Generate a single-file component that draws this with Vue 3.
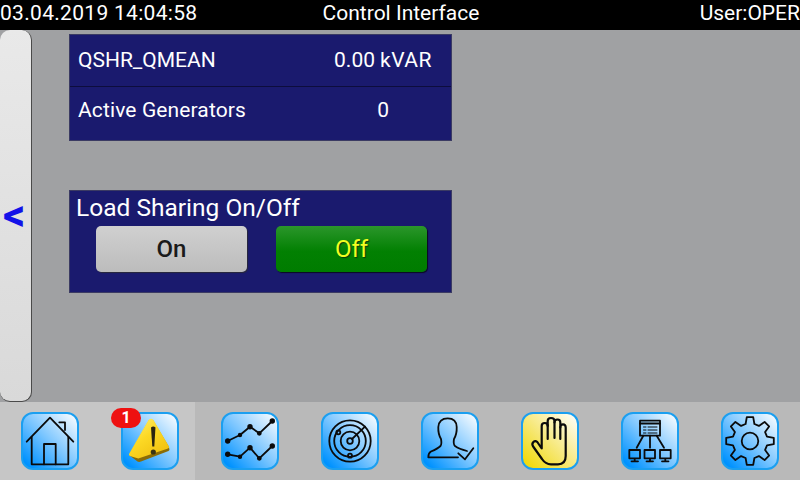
<template>
  <div class="screen">
    <header class="topbar">
      <span class="topbar-date">03.04.2019 14:04:58</span>
      <span class="topbar-title">Control Interface</span>
      <span class="topbar-user">User:OPER</span>
    </header>

    <main class="main">
      <div class="side-tab"><span class="side-arrow">&lt;</span></div>
      <div class="content">
        <section class="panel values">
          <div class="row">
            <span class="row-label">QSHR_QMEAN</span>
            <span class="row-value">0.00</span>
            <span class="row-unit">kVAR</span>
          </div>
          <div class="row">
            <span class="row-label">Active Generators</span>
            <span class="row-value single">0</span>
          </div>
        </section>

        <section class="panel sharing">
          <h2 class="panel-title">Load Sharing On/Off</h2>
          <div class="buttons">
            <button class="btn btn-on">On</button>
            <button class="btn btn-off">Off</button>
          </div>
        </section>
      </div>
    </main>

    <footer class="navbar">
      <div v-for="item in navItems" :key="item.name" class="nav-cell">
        <div class="tile" :class="{ yellow: item.name === 'hand' }">
          <span v-if="item.name === 'alarm'" class="badge">1</span>

          <svg v-if="item.name === 'home'" viewBox="0 0 58 58" class="icon">
            <path d="M5.700 29.700 L29 5.700 L52.300 29.700" />
            <path d="M10.700 25 V52.300 H47.300 V25" />
            <path d="M23 52.300 V32 H34.700 V52.300" />
            <path d="M38.300 10.300 H44 V18" />
          </svg>

          <svg v-else-if="item.name === 'alarm'" viewBox="0 0 58 58" class="icon">
            <defs>
              <linearGradient id="warn" x1="0" y1="0" x2="0.7" y2="1">
                <stop offset="0" stop-color="#fff27a" />
                <stop offset="0.5" stop-color="#fcd925" />
                <stop offset="1" stop-color="#f0c010" />
              </linearGradient>
            </defs>
            <path d="M8 43 L16.500 49.500 Q18 50.300 20 49.500 L47.500 39 Q49 38 48 35 L32 8 L28 8 Z" fill="#8a6c08" stroke="none" />
            <path d="M32.500 8 Q30 5.500 27.500 8 L8 42 Q7.500 43.500 9 44 L17.300 46.500 L47 36.500 Q48.500 36 48 34.500 Z" fill="url(#warn)" stroke="none" />
            <path d="M30 15.500 Q32.300 13.500 34.500 15.500 L33.300 34.500 L31.300 34.500 Z" fill="#2a2410" stroke="none" />
            <circle cx="32.300" cy="40" r="2.600" fill="#3a3414" stroke="none" />
          </svg>

          <svg v-else-if="item.name === 'trend'" viewBox="0 0 58 58" class="icon">
            <path d="M6.700 29 L19 23 L29 14.700 L38.300 21.300 L51.300 9" />
            <path d="M6.700 42.300 L19 44.700 L29 35.700 L38.300 46.300 L51.300 34" />
            <g class="dots">
              <circle cx="6.700" cy="29" r="1.800" /><circle cx="19" cy="23" r="1.300" /><circle cx="29" cy="14.700" r="1.800" /><circle cx="38.300" cy="21.300" r="1.500" /><circle cx="51.300" cy="9" r="1.800" />
              <circle cx="6.700" cy="42.300" r="1.800" /><circle cx="19" cy="44.700" r="1.300" /><circle cx="29" cy="35.700" r="1.800" /><circle cx="38.300" cy="46.300" r="1.500" /><circle cx="51.300" cy="34" r="1.800" />
            </g>
          </svg>

          <svg v-else-if="item.name === 'radar'" viewBox="0 0 58 58" class="icon">
            <circle cx="29" cy="29" r="20.700" />
            <circle cx="29" cy="29" r="15.800" />
            <circle cx="29" cy="29" r="9.300" />
            <circle cx="29" cy="29" r="2.800" />
            <path d="M31 27 L44 14.700" />
            <circle cx="17.300" cy="20.300" r="2" />
            <circle cx="29" cy="43.700" r="2" />
          </svg>

          <svg v-else-if="item.name === 'user'" viewBox="0 0 58 58" class="icon">
            <path d="M37 45.300 H7.300 Q7.300 41 10 39.500 Q17 36.500 19.500 34 Q21 32 20 27 Q17 22 17.300 15 Q18 6.300 26.700 6.300 Q35.500 6.300 35.700 15 Q36 22 33 27 Q32 32 34 34 Q38 37 46 39" />
            <path d="M37.300 41.300 L44 47.300 L52.300 36.300" />
          </svg>

          <svg v-else-if="item.name === 'hand'" viewBox="0 0 58 58" class="icon hand">
            <path d="M20.700 36.500 L16.300 30 Q14 28 12 30.500 Q10.500 32.500 12.500 35 L21 47 Q24.500 52.300 30 52.300 H37 Q44.700 52.300 44.700 44 V15.500 Q44.700 12.300 42 12.300 Q39.300 12.300 39.300 15.500 V10.500 Q39.300 7.500 36.500 7.500 Q33.500 7.500 33.500 10.500 V9 Q33.500 6 30 6 Q26.700 6 26.700 9 V14 Q26.700 11 23.700 11 Q20.700 11 20.700 14 Z" />
            <path d="M26.700 13 V27 M33.500 10 V26 M39.300 15 V27" />
          </svg>

          <svg v-else-if="item.name === 'network'" viewBox="0 0 58 58" class="icon">
            <path d="M19 8.700 H39 V23.700 H19 Z" />
            <path d="M19 11.500 H39" />
            <path d="M22.500 15 H25 M27 15 H36 M22.500 18 H25 M27 18 H36 M22.500 21 H25 M27 21 H36" stroke-width="1" />
            <path d="M22.300 23.700 L15.700 35.700 M29 23.700 V35.700 M35.700 23.700 L43 35.700" />
            <path d="M8.300 38 H19 V46.300 H8.300 Z M13.700 46.300 V49 M10.500 49.300 H17" />
            <path d="M23.500 38 H34 V46.300 H23.500 Z M29 46.300 V49 M25.500 49.300 H32" />
            <path d="M39 38 H49.700 V46.300 H39 Z M44.300 46.300 V49 M41 49.300 H47.500" />
          </svg>

          <svg v-else viewBox="0 0 58 58" class="icon">
            <path :d="gearPath" />
            <circle cx="29" cy="29" r="8.300" />
          </svg>
        </div>
      </div>
    </footer>
  </div>
</template>

<script setup>
const navItems = [
  { name: 'home' },
  { name: 'alarm' },
  { name: 'trend' },
  { name: 'radar' },
  { name: 'user' },
  { name: 'hand' },
  { name: 'network' },
  { name: 'gear' }
]

// 8 toothed outline around the centre of the settings tile
const buildGear = () => {
  const cx = 29
  const cy = 29
  const outer = 24
  const inner = 17.5
  const teeth = 8
  const step = (Math.PI * 2) / teeth
  const pts = []
  for (let i = 0; i < teeth; i++) {
    const a = i * step - Math.PI / 2
    const add = (r, off) => pts.push([cx + r * Math.cos(a + off), cy + r * Math.sin(a + off)])
    add(inner, -step * 0.32)
    add(outer, -step * 0.17)
    add(outer, step * 0.17)
    add(inner, step * 0.32)
  }
  return 'M' + pts.map(p => p[0].toFixed(1) + ' ' + p[1].toFixed(1)).join(' L') + ' Z'
}

const gearPath = buildGear()
</script>

<style>
html, body {
  margin: 0;
  padding: 0;
  background: #a0a1a3;
}
</style>

<style scoped>
.screen {
  width: 800px;
  height: 480px;
  display: flex;
  flex-direction: column;
  overflow: hidden;
  font-family: Roboto, "Liberation Sans", sans-serif;
  color: #fff;
  background: #a0a1a3;
}

.topbar {
  height: 30px;
  flex: none;
  display: grid;
  grid-template-columns: 1fr auto 1fr;
  align-items: center;
  background: #000;
  font-size: 21px;
  padding-bottom: 4px;
  box-sizing: border-box;
}

.topbar-date {
  letter-spacing: 0.3px;
}

.topbar-title {
  text-align: center;
  margin-left: 2px;
}

.topbar-user {
  text-align: right;
}

.main {
  flex: 1;
  display: flex;
  min-height: 0;
}

.side-tab {
  width: 32px;
  flex: none;
  box-sizing: border-box;
  display: flex;
  align-items: center;
  background: linear-gradient(to bottom, #e9e9e9, #d9d9d9);
  border-right: 1px solid #4a4a4a;
  border-bottom: 1px solid #4a4a4a;
  border-radius: 10px;
}

.side-arrow {
  color: #1212e8;
  font-size: 44px;
  font-weight: 700;
  line-height: 28px;
  margin-left: 3px;
  margin-top: -2px;
}

.content {
  padding: 4px 0 0 37px;
  display: flex;
  flex-direction: column;
  gap: 49px;
}

.panel {
  width: 383px;
  box-sizing: border-box;
  background: #1a1a6e;
  border: 1px solid #3b3b63;
}

.values {
  height: 107px;
}

.row {
  height: 51px;
  display: flex;
  align-items: center;
  font-size: 21px;
  padding: 0 0 2px 8px;
  box-sizing: border-box;
}

.row + .row {
  height: 54px;
  padding-bottom: 8px;
  border-top: 1px solid #0d0d3d;
}

.row-label {
  width: 255px;
}

.row + .row .row-label {
  letter-spacing: 0.12px;
}

.row-value {
  width: 42px;
  text-align: right;
}

.row-value.single {
  width: 56px;
}

.row-unit {
  margin-left: 5px;
  letter-spacing: 0.5px;
}

.sharing {
  height: 103px;
  padding: 2px 0 0 6px;
}

.panel-title {
  margin: 0;
  font-size: 24.500px;
  font-weight: 400;
  line-height: 29px;
}

.buttons {
  display: flex;
  gap: 29px;
  margin: 4px 0 0 20px;
}

.btn {
  width: 151px;
  height: 46px;
  padding: 0;
  border: none;
  border-radius: 5px;
  font-family: inherit;
  font-size: 24px;
}

.btn-on {
  font-weight: 500;
  color: #1a1a1a;
  background: linear-gradient(to bottom, #d0d0d0, #bcbcbc);
  box-shadow: 1px 1px 1px #2a2a3a;
}

.btn-off {
  color: #f0ff20;
  background: linear-gradient(to bottom, #2b962b, #028002 55%, #007c00);
  box-shadow: 1px 1px 1px #0a0a20;
  text-shadow: 1px 1px 1px #0a3a0a;
}

.navbar {
  height: 78px;
  flex: none;
  display: grid;
  grid-template-columns: 100px 95px repeat(6, 100px);
  background: #b9b9b9;
}

.nav-cell {
  padding: 10px 0 0 21px;
  box-sizing: border-box;
}

.nav-cell:nth-child(-n+2) {
  background: #c6c6c6;
}

.nav-cell:nth-child(n+3) {
  padding-left: 26px;
}

.tile {
  position: relative;
  width: 58px;
  height: 58px;
  box-sizing: border-box;
  border: 2px solid #1b9ff0;
  border-radius: 12px;
  background: linear-gradient(to top right, #0092ff 8%, #7cc6ff 50%, #ffffff 100%);
}

.tile.yellow {
  background: linear-gradient(to top right, #f0da10 8%, #f7e980 50%, #ffffff 100%);
}

.icon {
  position: absolute;
  left: -2px;
  top: -2px;
  width: 58px;
  height: 58px;
  fill: none;
  stroke: #0b0b0b;
  stroke-width: 1.800;
  stroke-linejoin: round;
  stroke-linecap: round;
}

.icon.hand {
  stroke-width: 2.200;
}

.dots circle {
  fill: #0b0b0b;
}

.badge {
  position: absolute;
  z-index: 1;
  left: -12px;
  top: -6px;
  width: 30px;
  height: 20px;
  border-radius: 10px;
  background: #ee1111;
  color: #fff;
  font-size: 16px;
  font-weight: 700;
  line-height: 20px;
  text-align: center;
}
</style>
